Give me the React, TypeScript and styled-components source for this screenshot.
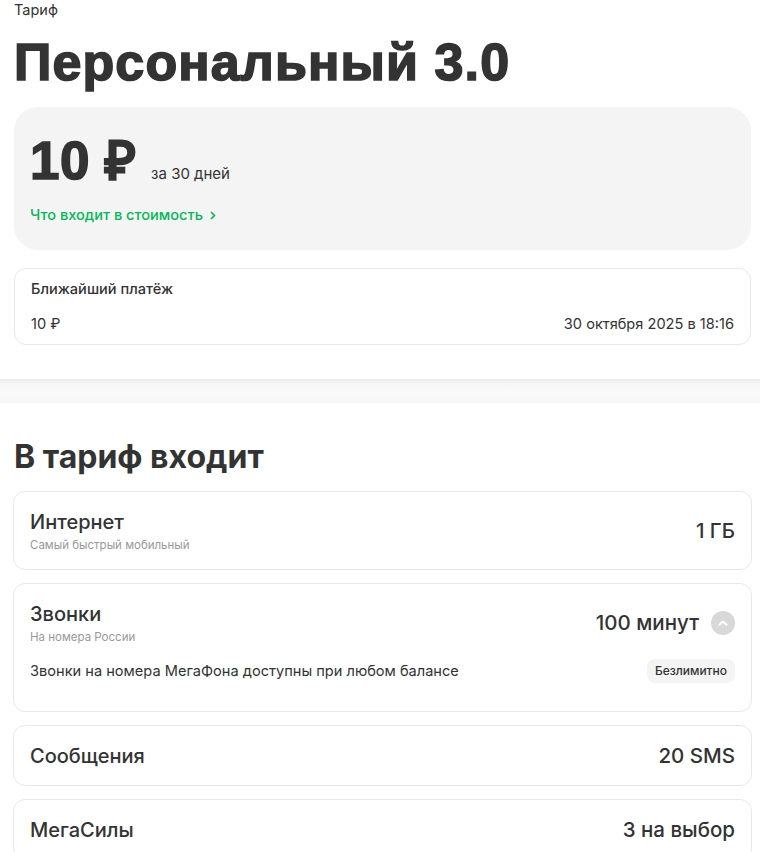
import React from "react";
import styled, { createGlobalStyle } from "styled-components";

const Global = createGlobalStyle`
  html, body { margin: 0; padding: 0; background: #fff; }
  body { font-family: Inter, "Noto Sans", sans-serif; color: #333; }
  * { box-sizing: border-box; }
`;

const Page = styled.div`
  width: 760px;
  overflow: hidden;
`;

const Top = styled.section`
  padding: 2px 9px 34px 14px;
  display: flex;
  flex-direction: column;
`;

const Crumb = styled.div`
  font-family: Inter, sans-serif;
  font-size: 14.5px;
  line-height: 16px;
  color: #333;
`;

const Title = styled.h1`
  margin: 14px 0 0;
  font-family: "Liberation Sans", Arial, sans-serif;
  font-weight: 700;
  font-size: 52px;
  line-height: 60px;
  color: #333;
  letter-spacing: 1.1px;
  -webkit-text-stroke: 1.6px #333;
`;

const PriceCard = styled.div`
  margin-top: 15px;
  background: #f4f4f4;
  border-radius: 24px;
  height: 143px;
  padding: 26px 16px 0;
  display: flex;
  flex-direction: column;
  align-items: flex-start;
`;

const PriceRow = styled.div`
  display: flex;
  align-items: baseline;
  gap: 14px;
`;

const Price = styled.span`
  font-family: "Liberation Sans", Arial, sans-serif;
  font-weight: 700;
  font-size: 53px;
  line-height: 56px;
  color: #333;
  -webkit-text-stroke: 1.6px #333;
  letter-spacing: 0.6px;
`;

const Period = styled.span`
  font-family: Inter, sans-serif;
  font-size: 15px;
  color: #333;
`;

const GreenLink = styled.a`
  margin-top: 17px;
  display: inline-flex;
  align-items: center;
  gap: 7px;
  font-family: Inter, sans-serif;
  font-weight: 500;
  font-size: 14.6px;
  line-height: 18px;
  color: #00b956;
  text-decoration: none;
`;

const PayCard = styled.div`
  margin-top: 18px;
  border: 1px solid #e8e8e8;
  border-radius: 12px;
  height: 77px;
  padding: 12px 16px 0;
  display: flex;
  flex-direction: column;
  gap: 18px;
  font-family: Inter, sans-serif;
  color: #333;
`;

const PayTitle = styled.div`
  font-size: 14.6px;
  font-weight: 500;
  line-height: 17px;
`;

const PayRow = styled.div`
  display: flex;
  justify-content: space-between;
  font-size: 14.6px;
  line-height: 17px;
`;

const Band = styled.div`
  height: 24px;
  background: linear-gradient(#ececec 0px, #f6f6f6 5px, #fafafa 14px, #f6f6f6 24px);
`;

const Included = styled.section`
  padding: 34px 8px 0 13px;
  display: flex;
  flex-direction: column;
  gap: 13px;
`;

const H2 = styled.h2`
  margin: 0 0 1px 1px;
  font-family: Inter, sans-serif;
  font-weight: 700;
  font-size: 32px;
  line-height: 40px;
  color: #333;
`;

const Card = styled.div<{ $h: number }>`
  border: 1px solid #e8e8e8;
  border-radius: 12px;
  min-height: ${(p) => p.$h}px;
  padding: 18px 16px 0;
  display: flex;
  flex-direction: column;
`;

const Row = styled.div`
  display: flex;
  align-items: center;
  justify-content: space-between;
`;

const Name = styled.div`
  font-family: Inter, sans-serif;
  font-weight: 500;
  font-size: 20px;
  line-height: 24px;
  color: #333;
`;

const Sub = styled.div`
  font-family: Inter, sans-serif;
  font-size: 11.5px;
  line-height: 14px;
  color: #999;
  margin-top: 4px;
`;

const Value = styled.div`
  font-family: Inter, sans-serif;
  font-weight: 500;
  font-size: 20.5px;
  line-height: 24px;
  color: #333;
  display: flex;
  align-items: center;
  gap: 12px;
`;

const Toggle = styled.span`
  width: 24px;
  height: 24px;
  border-radius: 50%;
  background: #d8d8d8;
  display: inline-flex;
  align-items: center;
  justify-content: center;
`;

const Detail = styled.div`
  margin-top: 15px;
  display: flex;
  align-items: center;
  justify-content: space-between;
  font-family: Inter, sans-serif;
  font-size: 14.6px;
  line-height: 24px;
  color: #333;
`;

const Badge = styled.span`
  background: #f4f4f4;
  border-radius: 8px;
  padding: 0 8px;
  height: 24px;
  display: inline-flex;
  align-items: center;
  font-family: Inter, sans-serif;
  font-size: 12px;
  font-weight: 500;
  color: #333;
`;

export default function App() {
  return (
    <Page>
      <Global />
      <Top>
        <Crumb>Тариф</Crumb>
        <Title>Персональный 3.0</Title>
        <PriceCard>
          <PriceRow>
            <Price>10 ₽</Price>
            <Period>за 30 дней</Period>
          </PriceRow>
          <GreenLink href="#">
            Что входит в стоимость
            <svg width="6" height="9" viewBox="0 0 6 9" fill="none">
              <path d="M1 1l3.5 3.5L1 8" stroke="#00b956" strokeWidth="1.6" />
            </svg>
          </GreenLink>
        </PriceCard>
        <PayCard>
          <PayTitle>Ближайший платёж</PayTitle>
          <PayRow>
            <span>10 ₽</span>
            <span>30 октября 2025 в 18:16</span>
          </PayRow>
        </PayCard>
      </Top>
      <Band />
      <Included>
        <H2>В тариф входит</H2>
        <Card $h={79}>
          <Row>
            <div>
              <Name>Интернет</Name>
              <Sub>Самый быстрый мобильный</Sub>
            </div>
            <Value>1 ГБ</Value>
          </Row>
        </Card>
        <Card $h={129}>
          <Row>
            <div>
              <Name>Звонки</Name>
              <Sub>На номера России</Sub>
            </div>
            <Value>
              100 минут
              <Toggle>
                <svg width="10" height="6" viewBox="0 0 10 6" fill="none">
                  <path d="M1.5 4.8L5 1.5l3.5 3.3" stroke="#fff" strokeWidth="2" strokeLinecap="round" strokeLinejoin="round" />
                </svg>
              </Toggle>
            </Value>
          </Row>
          <Detail>
            <span>Звонки на номера МегаФона доступны при любом балансе</span>
            <Badge>Безлимитно</Badge>
          </Detail>
        </Card>
        <Card $h={61}>
          <Row>
            <Name>Сообщения</Name>
            <Value>20 SMS</Value>
          </Row>
        </Card>
        <Card $h={61}>
          <Row>
            <Name>МегаСилы</Name>
            <Value>3 на выбор</Value>
          </Row>
        </Card>
      </Included>
    </Page>
  );
}
